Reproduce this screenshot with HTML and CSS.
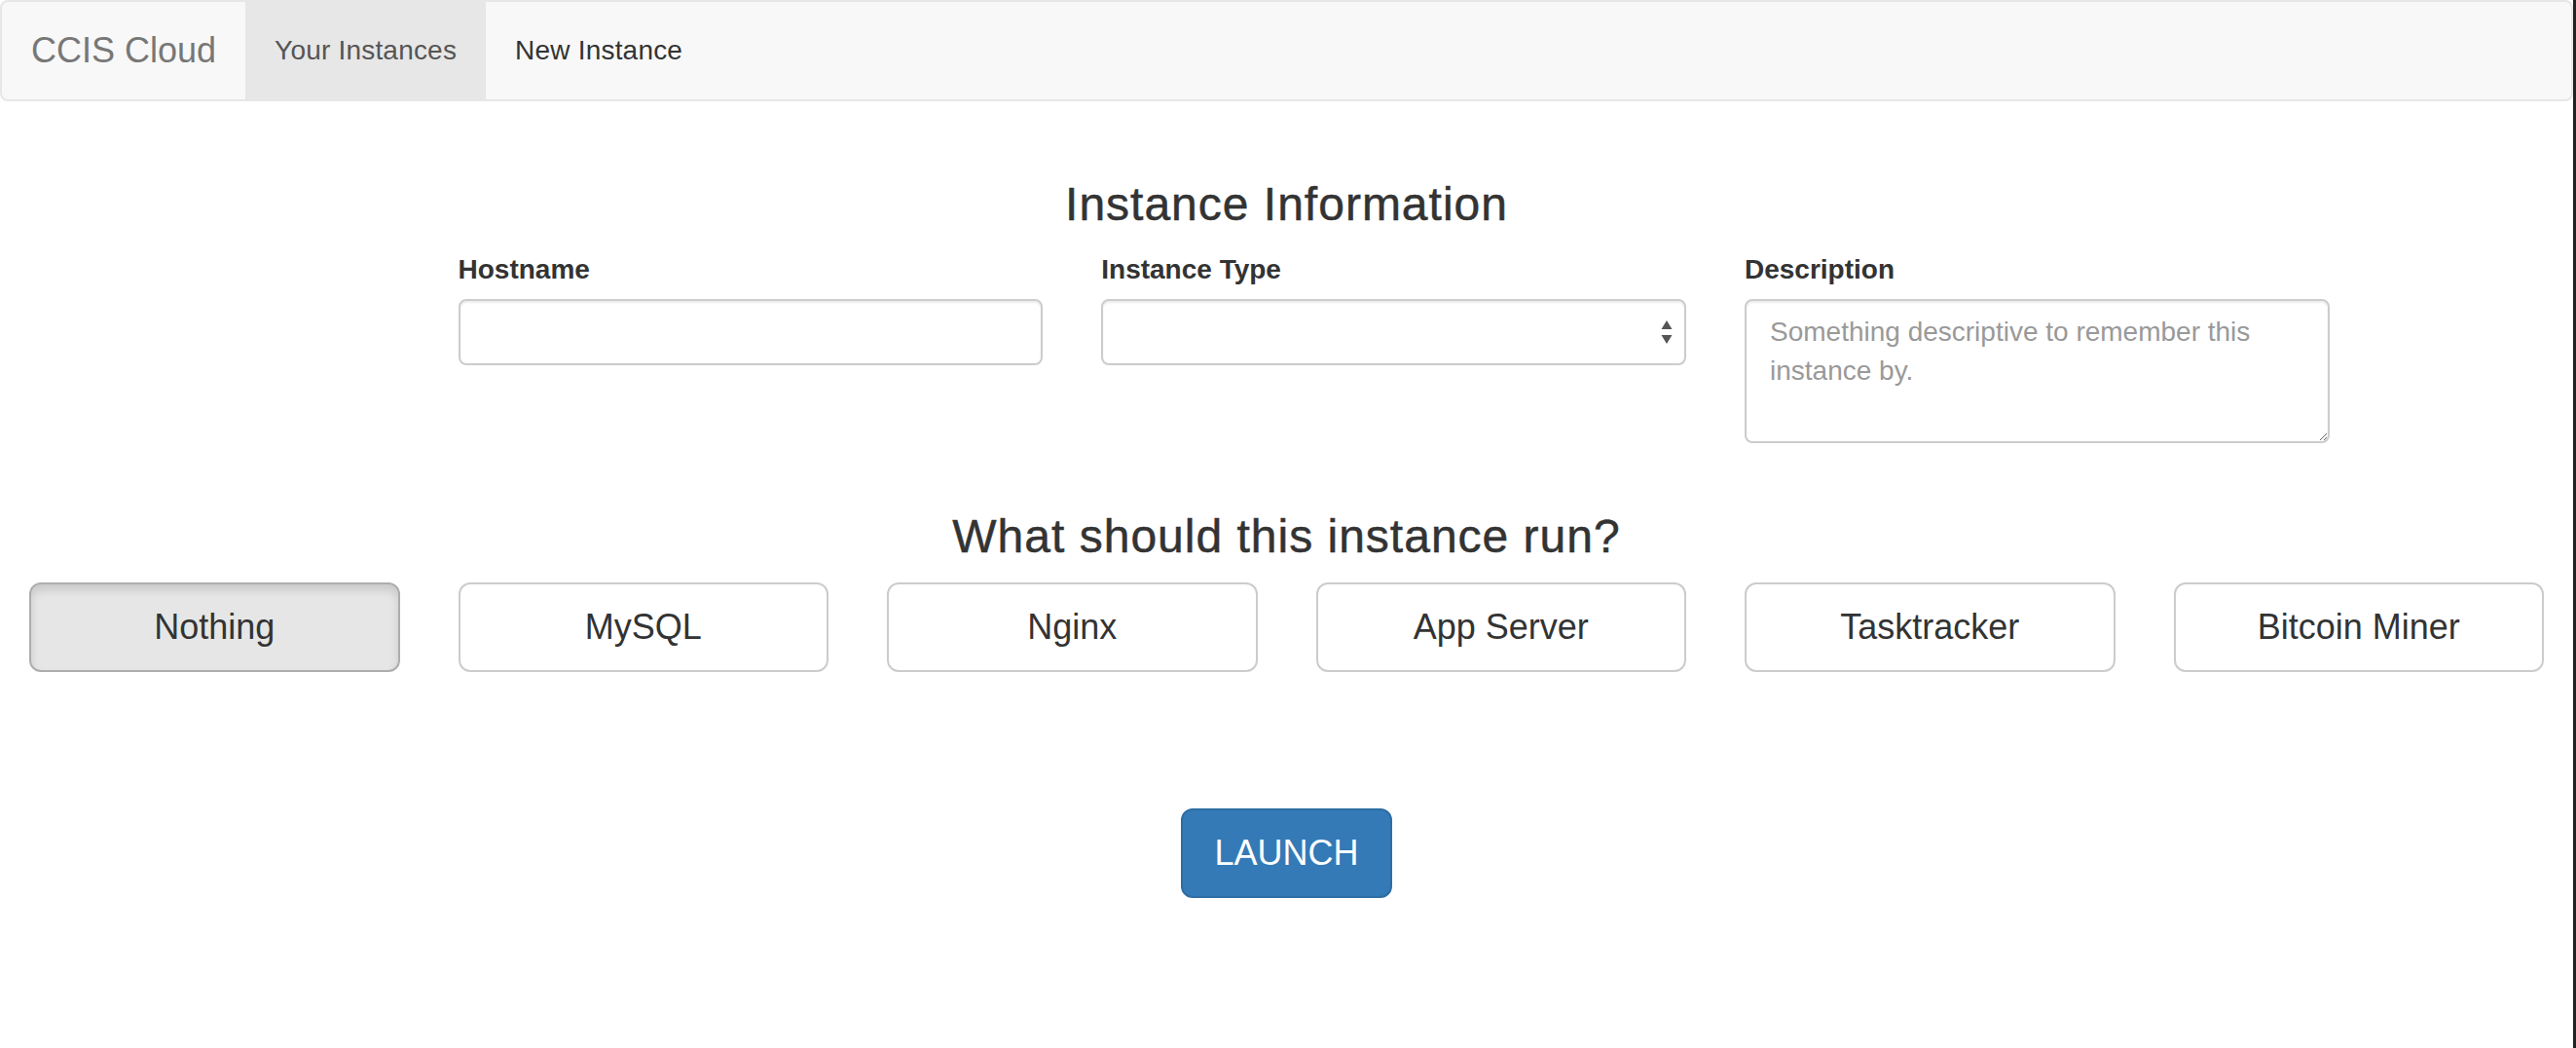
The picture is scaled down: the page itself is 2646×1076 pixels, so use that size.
FILE: index.html
```html
<!DOCTYPE html>
<html lang="en">
<head>
<meta charset="utf-8">
<title>CCIS Cloud - New Instance</title>
<link rel="stylesheet" href="styles.css">
</head>
<body>
<div class="screen">
  <div class="app">
    <nav class="navbar">
      <a class="brand" href="#">CCIS Cloud</a>
      <ul class="nav">
        <li class="nav-item active"><a href="#">Your Instances</a></li>
        <li class="nav-item hover"><a href="#">New Instance</a></li>
      </ul>
    </nav>
    <main class="content">
      <h3 class="section-title">Instance Information</h3>
      <div class="form-row">
        <div class="field field-first">
          <label class="field-label">Hostname</label>
          <input class="form-control" type="text">
        </div>
        <div class="field">
          <label class="field-label">Instance Type</label>
          <div class="select-wrap">
            <select class="form-control select"><option></option></select>
            <svg class="select-arrows" width="14" height="30" viewBox="0 0 14 30"><path d="M7 3 L12.5 12 L1.5 12 Z M7 27 L12.5 18 L1.5 18 Z" fill="#555"/></svg>
          </div>
        </div>
        <div class="field">
          <label class="field-label">Description</label>
          <textarea class="form-control textarea" rows="3" placeholder="Something descriptive to remember this instance by."></textarea>
        </div>
      </div>
      <h3 class="section-title">What should this instance run?</h3>
      <div class="choices">
        <div class="choice"><button class="btn btn-lg btn-default active">Nothing</button></div>
        <div class="choice"><button class="btn btn-lg btn-default">MySQL</button></div>
        <div class="choice"><button class="btn btn-lg btn-default">Nginx</button></div>
        <div class="choice"><button class="btn btn-lg btn-default">App Server</button></div>
        <div class="choice"><button class="btn btn-lg btn-default">Tasktracker</button></div>
        <div class="choice"><button class="btn btn-lg btn-default">Bitcoin Miner</button></div>
      </div>
      <div class="launch-row">
        <button class="btn btn-lg btn-primary">LAUNCH</button>
      </div>
    </main>
  </div>
  <div class="edge"></div>
</div>
</body>
</html>
```
FILE: styles.css
```css
* { box-sizing: border-box; }
html, body { margin: 0; padding: 0; background: #fff; }
body {
  font-family: "Liberation Sans", Arial, Helvetica, sans-serif;
  font-size: 28px;
  line-height: 40px;
  color: #333;
}
.screen { display: flex; width: 2646px; height: 1076px; overflow: hidden; }
.app { flex: 1; min-width: 0; }
.edge { width: 3px; background: #222; }

/* navbar */
.navbar {
  display: flex;
  height: 104px;
  background: #f8f8f8;
  border: 2px solid #e7e7e7;
  border-radius: 8px;
  margin-bottom: 40px;
  overflow: hidden;
}
.brand {
  display: block;
  padding: 30px 30px;
  font-size: 36px;
  line-height: 40px;
  color: #777;
  text-decoration: none;
}
.nav { display: flex; list-style: none; margin: 0; padding: 0; }
.nav-item a {
  display: block;
  padding: 30px 30px;
  font-size: 28px;
  line-height: 40px;
  letter-spacing: 0.2px;
  color: #777;
  text-decoration: none;
}
.nav-item.active a { background: #e7e7e7; color: #555; }
.nav-item.hover a { color: #333; }

.content { display: flow-root; }

/* headings */
.section-title {
  margin: 40px 0 20px;
  font-size: 48px;
  line-height: 1.1;
  font-weight: 500;
  letter-spacing: 1px;
  -webkit-text-stroke: 0.5px #333;
  text-align: center;
  color: #333;
}

/* form */
.form-row {
  display: grid;
  grid-template-columns: repeat(12, 1fr);
}
.field { grid-column: span 3; padding: 0 30px; margin-bottom: 30px; }
.field-first { grid-column: 3 / span 3; }
.field-label {
  display: inline-block;
  margin-bottom: 10px;
  font-weight: bold;
  font-size: 28px;
  line-height: 40px;
}
.form-control {
  display: block;
  width: 100%;
  height: 68px;
  padding: 12px 24px;
  font-family: inherit;
  font-size: 28px;
  line-height: 40px;
  color: #555;
  background: #fff;
  border: 2px solid #ccc;
  border-radius: 8px;
  box-shadow: inset 0 2px 2px rgba(0,0,0,.075);
  outline: none;
}
.select-wrap { position: relative; }
.select { -webkit-appearance: none; appearance: none; }
.select-arrows { position: absolute; right: 13px; top: 19px; }
.textarea { height: 148px; resize: vertical; }
.textarea::placeholder { color: #999; opacity: 1; }

/* choices */
.choices { display: grid; grid-template-columns: repeat(6, 1fr); }
.choice { padding: 0 30px; }
.btn {
  display: inline-block;
  font-family: inherit;
  font-weight: normal;
  text-align: center;
  white-space: nowrap;
  cursor: pointer;
  border: 2px solid transparent;
}
.btn-lg {
  padding: 20px 32px;
  font-size: 36px;
  line-height: 48px;
  border-radius: 12px;
}
.btn-default {
  width: 100%;
  color: #333;
  background: #fff;
  border-color: #ccc;
}
.btn-default.active {
  background: #e6e6e6;
  border-color: #adadad;
  box-shadow: inset 0 6px 10px rgba(0,0,0,.125);
}
.launch-row { margin-top: 140px; text-align: center; }
.btn-primary {
  color: #fff;
  background: #337ab7;
  border-color: #2e6da4;
}
```
